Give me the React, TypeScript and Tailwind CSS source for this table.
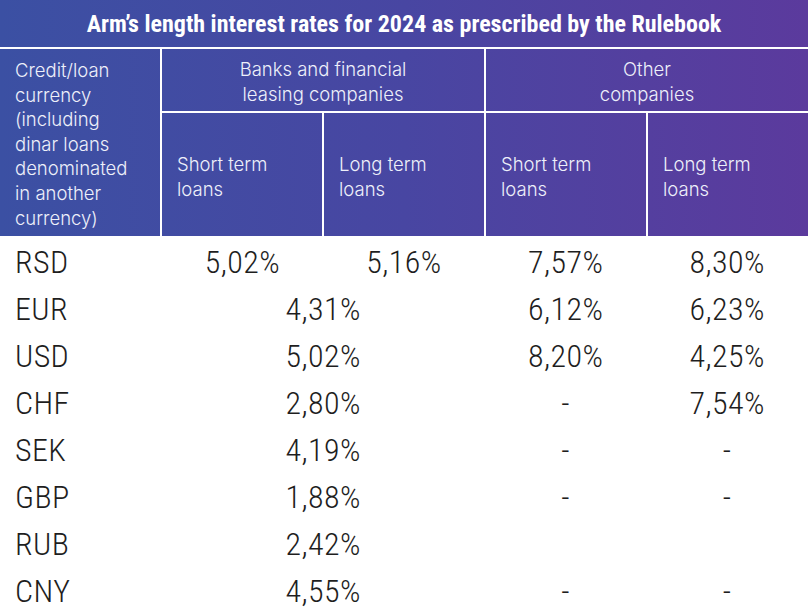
import React from 'react'

const head = 'bg-fixed bg-linear-to-r from-[#3b50a3] via-[#4846a2] to-[#5b3a9d]'

type Row = { code: string; cells: (string | null)[]; merged?: boolean }

// merged rows: first value spans both bank columns
const rows: Row[] = [
  { code: 'RSD', cells: ['5,02%', '5,16%', '7,57%', '8,30%'] },
  { code: 'EUR', cells: ['4,31%', '6,12%', '6,23%'], merged: true },
  { code: 'USD', cells: ['5,02%', '8,20%', '4,25%'], merged: true },
  { code: 'CHF', cells: ['2,80%', '-', '7,54%'], merged: true },
  { code: 'SEK', cells: ['4,19%', '-', '-'], merged: true },
  { code: 'GBP', cells: ['1,88%', '-', '-'], merged: true },
  { code: 'RUB', cells: ['2,42%', null, null], merged: true },
  { code: 'CNY', cells: ['4,55%', '-', '-'], merged: true },
]

function Value({ v, span }: { v: string | null; span?: boolean }) {
  return (
    <div className={`${span ? 'col-span-2' : ''} flex items-center justify-center`}>
      {v}
    </div>
  )
}

export default function App() {
  return (
    <div className="w-[808px] h-[616px] bg-white overflow-hidden">
      <div
        className={`${head} h-[47px] flex items-center justify-center text-white font-['Roboto_Condensed',sans-serif] font-bold text-[24px]`}
      >
        Arm’s length interest rates for 2024 as prescribed by the Rulebook
      </div>

      <div className="mt-[2px] grid grid-cols-5 grid-rows-[62px_123px] gap-[2px] text-[#eef0fa] font-['Inter',sans-serif] font-light text-[18.5px] leading-[24.6px]">
        <div className={`${head} row-span-2 pl-[15px] pt-[9px]`}>
          Credit/loan
          <br />
          currency
          <br />
          (including
          <br />
          dinar loans
          <br />
          denominated
          <br />
          in another
          <br />
          currency)
        </div>
        <div className={`${head} col-span-2 flex items-center justify-center text-center pt-[3px]`}>
          Banks and financial
          <br />
          leasing companies
        </div>
        <div className={`${head} col-span-2 flex items-center justify-center text-center pt-[3px]`}>
          Other
          <br />
          companies
        </div>
        {[0, 1, 2, 3].map(i => (
          <div key={i} className={`${head} flex items-center pl-[15px] pt-[5px]`}>
            <span>
              {i % 2 === 0 ? 'Short term' : 'Long term'}
              <br />
              loans
            </span>
          </div>
        ))}
      </div>

      <div className="pt-[2px] text-[#1e1e1e] font-['Roboto_Condensed',sans-serif] font-light text-[32px] tracking-[0.4px]">
        {rows.map(r => (
          <div key={r.code} className="grid grid-cols-5 h-[47px] items-center">
            <div className="pl-[15px]">{r.code}</div>
            {r.merged ? (
              <>
                <Value v={r.cells[0]} span />
                <Value v={r.cells[1]} />
                <Value v={r.cells[2]} />
              </>
            ) : (
              r.cells.map((c, i) => <Value key={i} v={c} />)
            )}
          </div>
        ))}
      </div>
    </div>
  )
}
